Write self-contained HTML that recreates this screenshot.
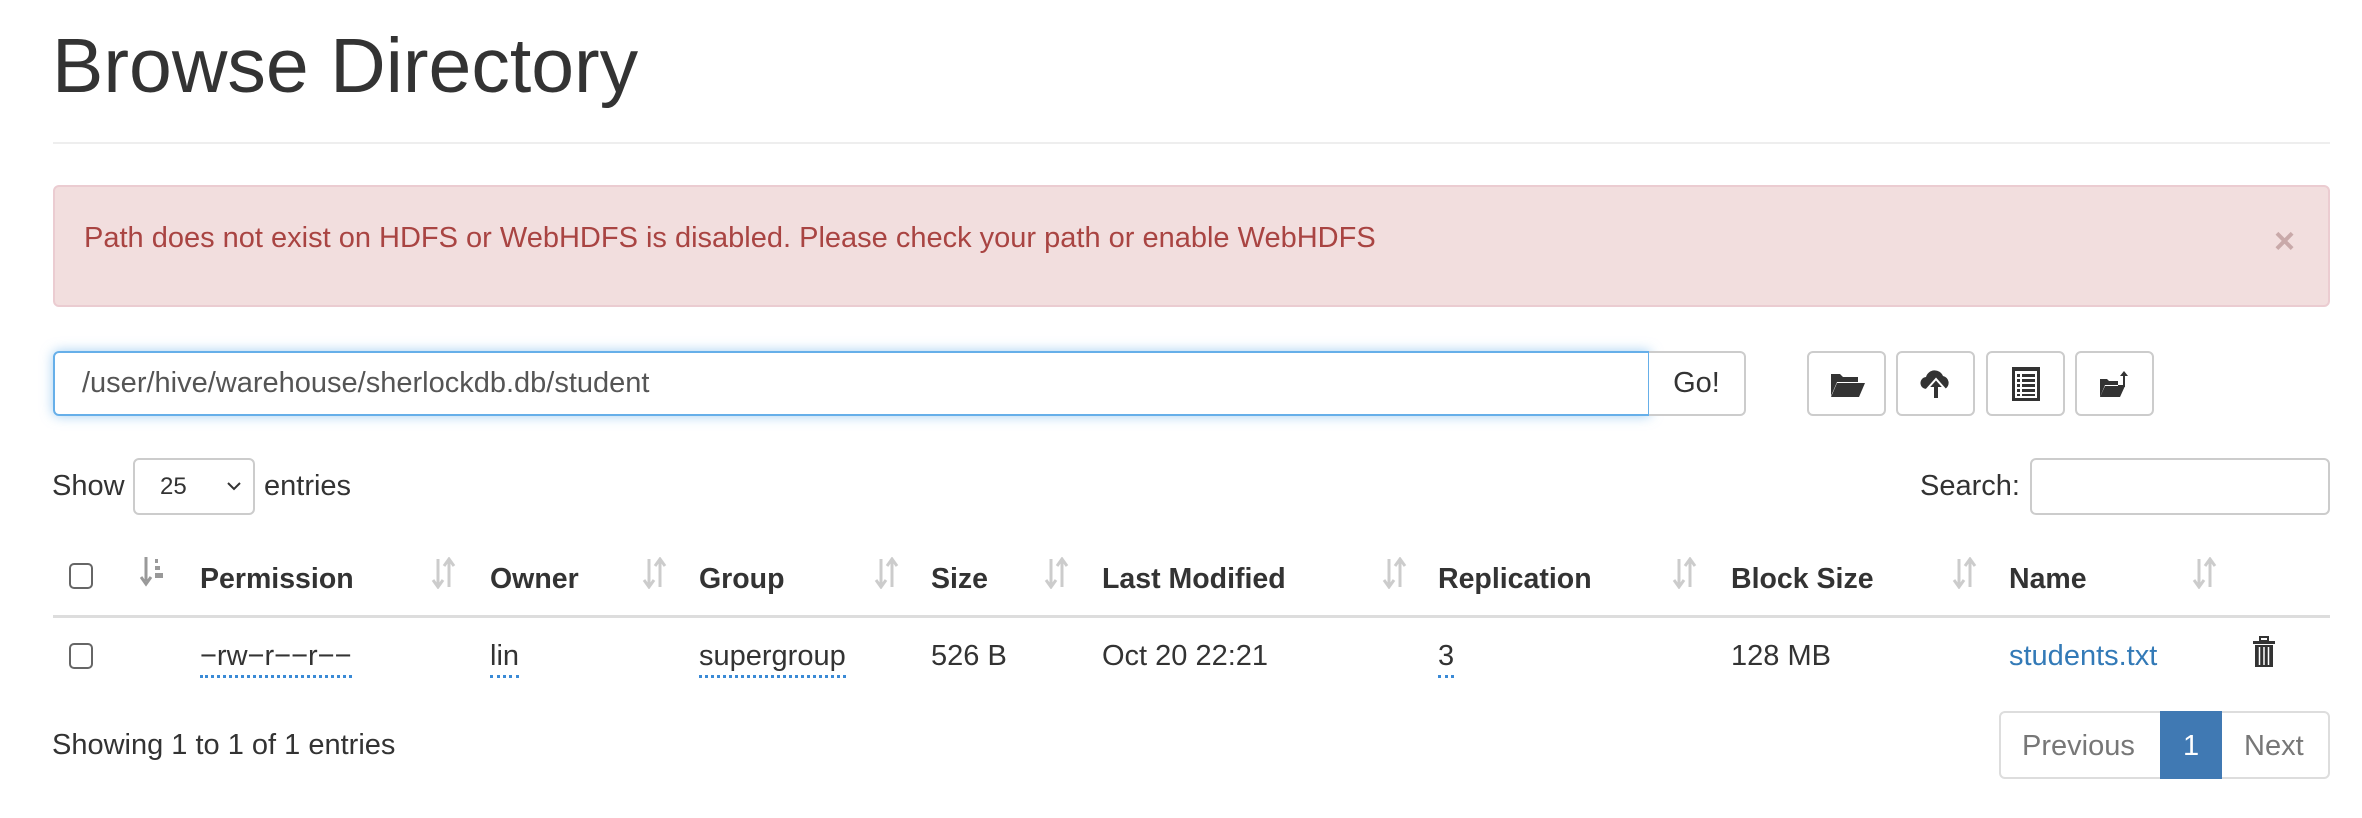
<!DOCTYPE html>
<html><head><meta charset="utf-8"><style>
*{box-sizing:border-box;margin:0;padding:0}
body{width:2362px;height:818px;background:#fff;font-family:"Liberation Sans",Arial,sans-serif;color:#333;font-size:29px;position:relative;overflow:hidden}
.a{position:absolute;white-space:nowrap}
.btn{position:absolute;border:2px solid #ccc;border-radius:6px;background:#fff;display:flex;align-items:center;justify-content:center}
.th{position:absolute;top:563px;font-weight:bold;font-size:28.5px}
.sort{position:absolute;top:557px}
.td{position:absolute;top:640px}
.dot{border-bottom:3px dotted #3a8ad6;padding-bottom:3px}
.cb{position:absolute;width:24px;height:26px;border:2px solid #666;border-radius:5px}
</style></head><body>
<div class="a" style="left:52px;top:22px;font-size:77px;color:#333">Browse Directory</div>
<div class="a" style="left:53px;top:142px;width:2277px;height:2px;background:#eee"></div>
<div class="a" style="left:53px;top:185px;width:2277px;height:122px;background:#f2dede;border:2px solid #ebccd1;border-radius:6px"></div>
<div class="a" style="left:84px;top:222px;color:#a94442;font-size:29px">Path does not exist on HDFS or WebHDFS is disabled. Please check your path or enable WebHDFS</div>
<div class="a" style="left:2274px;top:220px;color:#c9a9a9;font-size:36px;font-weight:bold">×</div>
<div class="a" style="left:53px;top:351px;width:1597px;height:65px;border:2px solid #66afe9;border-radius:6px 0 0 6px;box-shadow:0 0 12px rgba(102,175,233,.6)"></div>
<div class="a" style="left:82px;top:367px;font-size:29px;color:#555">/user/hive/warehouse/sherlockdb.db/student</div>
<div class="btn" style="left:1649px;top:351px;width:97px;height:65px;border-radius:0 6px 6px 0;border-left:none;font-size:29px">Go!</div>
<div class="btn" style="left:1807px;top:351px;width:79px;height:65px"><svg width="36" height="28" viewBox="0 0 36 28"><path d="M2 4h9l3 3h15v5H8L2 26z" fill="#333"/><path d="M8 13h28l-6 14H2z" fill="#333"/></svg></div>
<div class="btn" style="left:1896px;top:351px;width:79px;height:65px"><svg width="32" height="34" viewBox="0 0 32 34"><path d="M7 22a6 6 0 0 1-1-12 9 9 0 0 1 17-1 7 7 0 0 1 2 13z" fill="#333"/><path d="M16 12l-8 9h5v11h6V21h5z" fill="#333" stroke="#fff" stroke-width="2"/></svg></div>
<div class="btn" style="left:1986px;top:351px;width:79px;height:65px"><svg width="28" height="34" viewBox="0 0 28 34"><rect x="0" y="0" width="28" height="34" fill="#333"/><rect x="3" y="4" width="22" height="27" fill="#fff"/><g fill="#333"><rect x="5" y="7" width="3" height="3"/><rect x="10" y="7" width="13" height="3"/><rect x="5" y="12" width="3" height="3"/><rect x="10" y="12" width="13" height="3"/><rect x="5" y="17" width="3" height="3"/><rect x="10" y="17" width="13" height="3"/><rect x="5" y="22" width="3" height="3"/><rect x="10" y="22" width="13" height="3"/><rect x="5" y="27" width="3" height="2"/><rect x="10" y="27" width="13" height="2"/></g></svg></div>
<div class="btn" style="left:2075px;top:351px;width:79px;height:65px"><svg width="32" height="30" viewBox="0 0 32 30"><path d="M1 10h7l2 2h9v4H6L1 28z" fill="#333"/><path d="M6 17h20l-5 11H1z" fill="#333"/><path d="M25 2l-4 5h3v9h-5v2h7V7h3z" fill="#333"/></svg></div>
<div class="a" style="left:52px;top:470px">Show</div>
<div class="a" style="left:133px;top:458px;width:122px;height:57px;border:2px solid #ccc;border-radius:6px"></div>
<div class="a" style="left:160px;top:473px;font-size:24px">25</div>
<svg class="a" style="left:226px;top:480px" width="16" height="12"><path d="M2 3l6 6 6-6" fill="none" stroke="#333" stroke-width="2"/></svg>
<div class="a" style="left:264px;top:470px">entries</div>
<div class="a" style="left:1920px;top:470px">Search:</div>
<div class="a" style="left:2030px;top:458px;width:300px;height:57px;border:2px solid #ccc;border-radius:6px"></div>
<div class="cb" style="left:69px;top:563px"></div>
<svg class="sort" style="left:140px" width="26" height="30"><path d="M6 0v24M1 20l5 7 5-7" stroke="#999" stroke-width="3" fill="none"/><rect x="15" y="2" width="3" height="4" fill="#999"/><rect x="15" y="9" width="5" height="4" fill="#999"/><rect x="15" y="16" width="8" height="5" fill="#999"/></svg>
<div class="th" style="left:200px">Permission</div>
<div class="th" style="left:490px">Owner</div>
<div class="th" style="left:699px">Group</div>
<div class="th" style="left:931px">Size</div>
<div class="th" style="left:1102px">Last Modified</div>
<div class="th" style="left:1438px">Replication</div>
<div class="th" style="left:1731px">Block Size</div>
<div class="th" style="left:2009px">Name</div>
<svg class="sort" style="left:430px" width="28" height="32"><path d="M8 2v26M3 23l5 7 5-7M19 30V4M14 9l5-7 5 7" stroke="#ccc" stroke-width="3" fill="none"/></svg>
<svg class="sort" style="left:641px" width="28" height="32"><path d="M8 2v26M3 23l5 7 5-7M19 30V4M14 9l5-7 5 7" stroke="#ccc" stroke-width="3" fill="none"/></svg>
<svg class="sort" style="left:873px" width="28" height="32"><path d="M8 2v26M3 23l5 7 5-7M19 30V4M14 9l5-7 5 7" stroke="#ccc" stroke-width="3" fill="none"/></svg>
<svg class="sort" style="left:1043px" width="28" height="32"><path d="M8 2v26M3 23l5 7 5-7M19 30V4M14 9l5-7 5 7" stroke="#ccc" stroke-width="3" fill="none"/></svg>
<svg class="sort" style="left:1381px" width="28" height="32"><path d="M8 2v26M3 23l5 7 5-7M19 30V4M14 9l5-7 5 7" stroke="#ccc" stroke-width="3" fill="none"/></svg>
<svg class="sort" style="left:1671px" width="28" height="32"><path d="M8 2v26M3 23l5 7 5-7M19 30V4M14 9l5-7 5 7" stroke="#ccc" stroke-width="3" fill="none"/></svg>
<svg class="sort" style="left:1951px" width="28" height="32"><path d="M8 2v26M3 23l5 7 5-7M19 30V4M14 9l5-7 5 7" stroke="#ccc" stroke-width="3" fill="none"/></svg>
<svg class="sort" style="left:2191px" width="28" height="32"><path d="M8 2v26M3 23l5 7 5-7M19 30V4M14 9l5-7 5 7" stroke="#ccc" stroke-width="3" fill="none"/></svg>
<div class="a" style="left:53px;top:615px;width:2277px;height:3px;background:#ddd"></div>
<div class="cb" style="left:69px;top:643px"></div>
<div class="td" style="left:200px"><span class="dot">−rw−r−−r−−</span></div>
<div class="td" style="left:490px"><span class="dot">lin</span></div>
<div class="td" style="left:699px"><span class="dot">supergroup</span></div>
<div class="td" style="left:931px">526 B</div>
<div class="td" style="left:1102px">Oct 20 22:21</div>
<div class="td" style="left:1438px"><span class="dot">3</span></div>
<div class="td" style="left:1731px">128 MB</div>
<div class="td" style="left:2009px;color:#337ab7">students.txt</div>
<svg class="a" style="left:2252px;top:636px" width="24" height="32"><rect x="8" y="1" width="8" height="4" fill="none" stroke="#333" stroke-width="2"/><rect x="1" y="5" width="22" height="3" fill="#333"/><path d="M3 9h18v22H3z" fill="#333"/><path d="M7.5 11v18M12 11v18M16.5 11v18" stroke="#fff" stroke-width="1.5"/></svg>
<div class="a" style="left:52px;top:729px">Showing 1 to 1 of 1 entries</div>
<div class="a" style="left:1999px;top:711px;width:331px;height:68px;border:2px solid #ddd;border-radius:6px"></div>
<div class="a" style="left:2160px;top:711px;width:62px;height:68px;background:#4079b3"></div>
<div class="a" style="left:2022px;top:730px;color:#777">Previous</div>
<div class="a" style="left:2183px;top:730px;color:#fff">1</div>
<div class="a" style="left:2244px;top:730px;color:#777">Next</div>
</body></html>
